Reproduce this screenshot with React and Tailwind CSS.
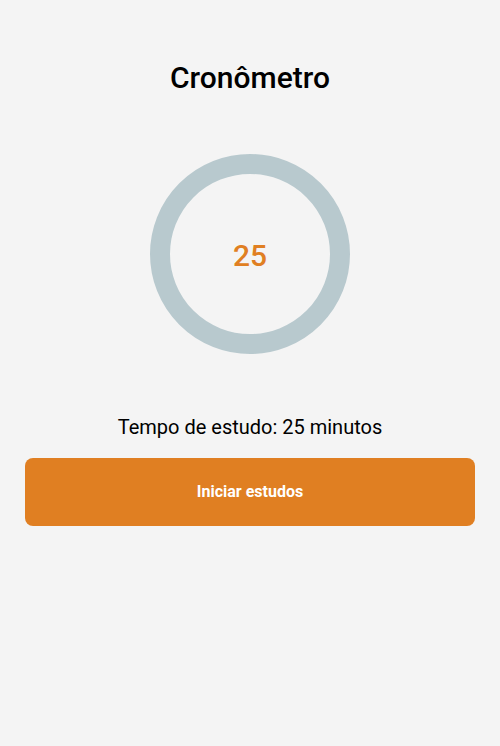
export default function App() {
  return (
    <div
      className="w-full min-h-[746px] bg-[#f4f4f4] flex flex-col items-center px-[25px] pt-[60px]"
      style={{ fontFamily: "Roboto, 'Liberation Sans', sans-serif" }}
    >
      <h1 className="text-[30px] leading-[36px] font-medium text-black">Cronômetro</h1>

      <div className="mt-[58px] w-[200px] h-[200px] rounded-full border-[20px] border-[#b8c9ce] flex items-center justify-center">
        <span className="pt-[3px] text-[30px] leading-[36px] font-medium text-[#e07f22]">25</span>
      </div>

      <p className="mt-[59px] text-[20px] leading-[28px] text-black">Tempo de estudo: 25 minutos</p>

      <button className="mt-[17px] w-full h-[68px] rounded-[8px] bg-[#e07f22] text-white text-[16px] font-bold">
        Iniciar estudos
      </button>
    </div>
  );
}
